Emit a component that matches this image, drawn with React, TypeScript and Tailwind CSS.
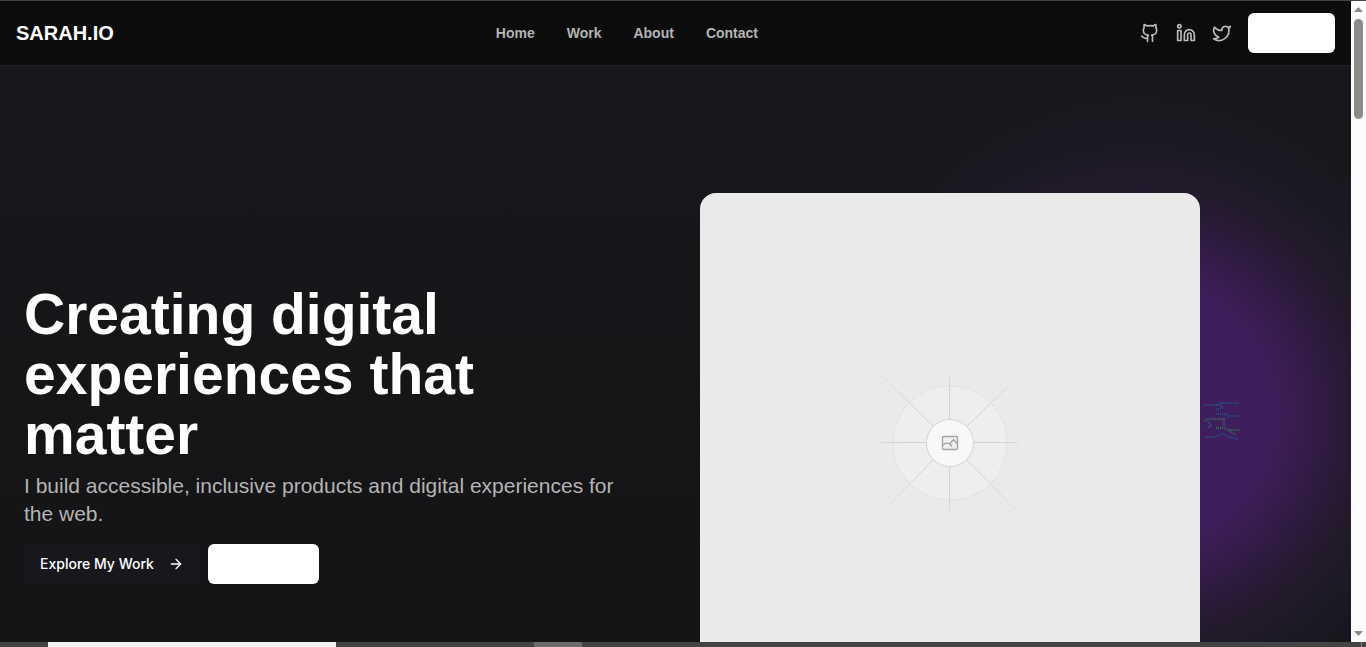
import { ArrowRight, Github, Linkedin, Twitter } from 'lucide-react';

const navItems = [
  { text: 'Home', to: '#home' },
  { text: 'Work', to: '#work' },
  { text: 'About', to: '#about' },
  { text: 'Contact', to: '#contact' },
];

const socials = [
  { label: 'GitHub', Icon: Github },
  { label: 'LinkedIn', Icon: Linkedin },
  { label: 'Twitter', Icon: Twitter },
];

const Header: React.FC = () => (
  <header className="flex h-[65px] shrink-0 items-center justify-between border-b border-[#22222a] bg-[#0c0c0c] px-4">
    <a href="#home" className="text-xl font-bold text-white">
      SARAH.IO
    </a>
    <nav className="flex gap-8 text-sm font-bold text-[#b4b4b4]">
      {navItems.map((item) => (
        <a key={item.to} href={item.to} className="hover:text-white">
          {item.text}
        </a>
      ))}
    </nav>
    <div className="flex items-center gap-4 text-[#bcbcbc]">
      {socials.map(({ label, Icon }) => (
        <a key={label} href={`#${label}`} aria-label={label} className="hover:text-white">
          <Icon size={20} strokeWidth={2} />
        </a>
      ))}
      <button type="button" aria-label="Resume" className="h-10 w-[87px] rounded-md bg-white" />
    </div>
  </header>
);

const Placeholder: React.FC = () => (
  <div className="flex aspect-square w-full max-w-[500px] items-center justify-center rounded-2xl bg-[#eaeaea]">
    <svg width="144" height="144" viewBox="0 0 144 144" fill="none" role="img" aria-label="Portrait placeholder">
      <defs>
        <radialGradient id="rays" gradientUnits="userSpaceOnUse" cx="72" cy="72" r="100">
          <stop offset="0.5" stopColor="#d3d3d3" />
          <stop offset="1" stopColor="#e2e2e2" />
        </radialGradient>
      </defs>
      <circle cx="72" cy="72" r="57" fill="#eeeeee" stroke="#d9d9d9" strokeDasharray="2 2" />
      <path
        d="M71.5 3V48M71.5 96V140M3 71.5H48M96 71.5H140M4 5L55 55M142 4L89 55M3 142L55 89M140 141L89 89"
        stroke="url(#rays)"
      />
      <circle cx="72" cy="72" r="23.5" fill="#f8f8f8" stroke="#d4d4d4" />
      <rect x="64.5" y="65.5" width="15" height="13" rx="1" fill="#f0f0f0" stroke="#a3a3a3" strokeWidth="1.3" />
      <path d="M65 74c2-2 5-2 7-1l2 2.5M71.5 73l4-4.5 4 4.5" stroke="#a3a3a3" strokeWidth="1.3" />
    </svg>
  </div>
);

const Squiggle: React.FC = () => (
  <svg
    className="absolute top-[335px] right-[110px] hidden lg:block"
    width="38"
    height="40"
    viewBox="0 0 38 40"
    fill="none"
    strokeWidth="2"
    strokeDasharray="1 1"
    aria-hidden="true"
  >
    <path
      d="M1 4h14l2-2h18M17 4l3 2-7 3M13 13h10l2 2h11M2 36h11l5-3 5 1 5 3 8 1"
      stroke="#245089"
    />
    <path d="M1 20l3-2h17v8M5 20l3 5-4 2M13 27h8l3 2h13M25 29l8 5" stroke="#3a6460" />
  </svg>
);

const Hero: React.FC = () => (
  <section className="relative min-h-0 flex-1 overflow-hidden bg-linear-to-b from-[#18181c] to-[#141416] px-6 pt-[127px]">
    <div className="absolute -top-3 -right-[150px] size-[720px] bg-[radial-gradient(circle_closest-side,#3f1e5d_0%,#3e1e5b_36%,#391d52_42%,#331b48_48%,#2b1a39_55%,#231a2c_63%,#1b1923_75%,#18181b00_92%)]" />
    <Squiggle />
    <div className="relative grid grid-cols-2 items-center gap-12">
      <div className="flex flex-col pb-[18px]">
        <h1 className="text-[57px] leading-[60px] font-bold text-white">
          Creating digital
          <br />
          experiences that
          <br />
          matter
        </h1>
        <p className="mt-2 max-w-[600px] text-[21px] leading-7 text-[#b4b4b4]">
          I build accessible, inclusive products and digital experiences for the web.
        </p>
        <div className="mt-4 flex gap-2">
          <button
            type="button"
            className="flex h-10 w-44 items-center justify-between rounded-md bg-[#17171c] px-4 font-[Inter,sans-serif] text-sm font-medium text-white"
          >
            Explore My Work
            <ArrowRight size={16} />
          </button>
          <button type="button" aria-label="Contact Me" className="h-10 w-[111px] rounded-md bg-white" />
        </div>
      </div>
      <Placeholder />
    </div>
  </section>
);

const Scrollbar: React.FC = () => (
  <div className="flex w-[15px] shrink-0 flex-col items-center bg-[#fcfcfc] py-[6px]" aria-hidden="true">
    <svg width="9" height="5" viewBox="0 0 9 5" fill="#8b8b89">
      <path d="M0 5L4.5 0L9 5Z" />
    </svg>
    <div className="mt-[7px] h-[100px] w-[9px] rounded-full bg-[#8b8b89]" />
    <svg className="mt-auto" width="9" height="5" viewBox="0 0 9 5" fill="#8b8b89">
      <path d="M0 0H9L4.5 5Z" />
    </svg>
  </div>
);

const BottomBar: React.FC = () => (
  <div className="flex h-[5px] shrink-0 bg-[#444444] pl-12" aria-hidden="true">
    <div className="w-72 bg-[#f0f0f0]" />
    <div className="ml-[198px] w-12 bg-[#6b6b6d]" />
    <div className="mr-1 ml-auto w-px bg-[#8b8b89]" />
  </div>
);

export default function App() {
  return (
    <div className="flex h-screen flex-col overflow-hidden border-t border-[#444444] bg-[#141416] font-['Liberation_Sans',Arial,sans-serif]">
      <div className="flex min-h-0 flex-1">
        <main className="flex min-w-0 flex-1 flex-col">
          <Header />
          <Hero />
        </main>
        <Scrollbar />
      </div>
      <BottomBar />
    </div>
  );
}
